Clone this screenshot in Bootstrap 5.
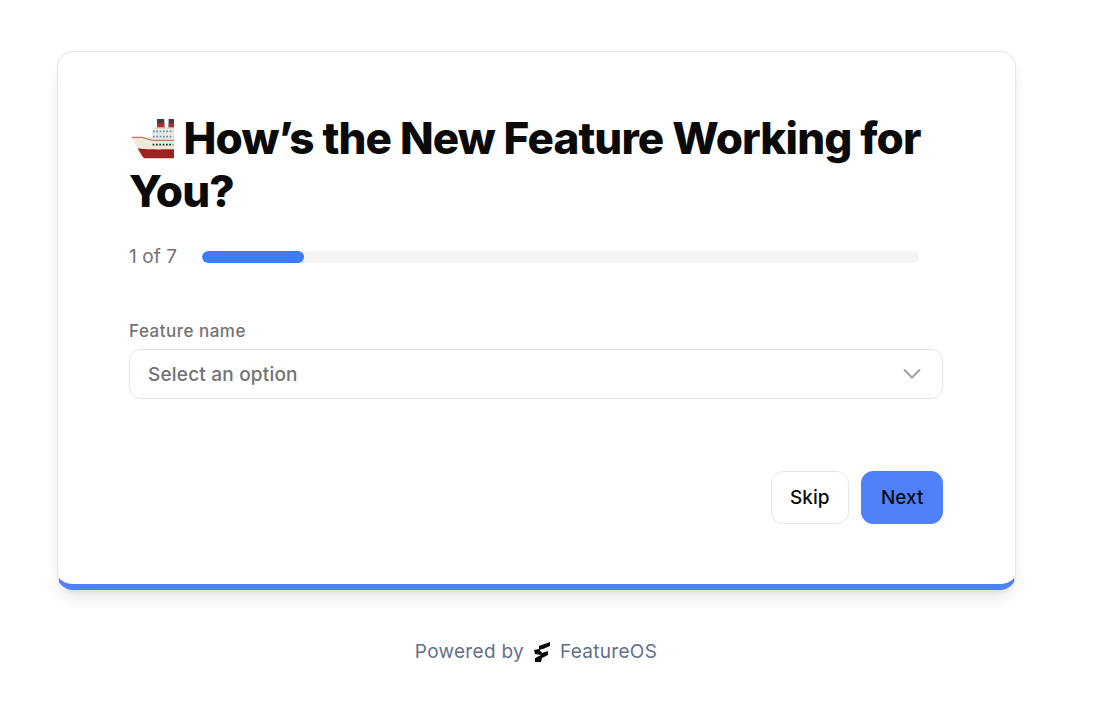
<!DOCTYPE html>
<html lang="en"><head><meta charset="utf-8"><title>Survey</title>
<link href="https://cdn.jsdelivr.net/npm/bootstrap@5.3.0/dist/css/bootstrap.min.css" rel="stylesheet">
<style>
body{font-family:Inter,"Liberation Sans",sans-serif;background:#fff;}
.page-wrap{width:959px;margin-left:56.5px;padding-top:50.5px;}
.survey-card{height:539.5px;border:1px solid #e5e5e5;border-bottom:6px solid #4f81fb;border-radius:16px;padding:60px 72px 0 71.500px;box-shadow:0 10px 15px -3px rgba(0,0,0,.1),0 4px 6px -4px rgba(0,0,0,.1);background:#fff;}
.survey-title{font-family:Inter,sans-serif;font-size:44px;line-height:53px;font-weight:800;color:#0a0a0a;letter-spacing:-.87px;margin:0;}
.ship{width:43px;height:39.300px;vertical-align:-5px;margin:0 10px 0 1.500px;}
.step-row{margin-top:27px;height:24px;width:790px;gap:24.500px;}
.step-text{font-size:19px;letter-spacing:.1px;color:#737373;white-space:nowrap;line-height:24px;}
.track{height:12px;background:#f5f5f5;border-radius:6px;flex:1;overflow:hidden;}
.fill{height:12px;background:#3b7cfb;border-radius:6px;}
.field-label{font-size:17px;letter-spacing:.5px;font-weight:500;color:#737373;line-height:24px;margin-top:50px;margin-bottom:6px;display:block;}
.select-box{height:50px;border:1px solid #e5e5e5;border-radius:12px;padding:0 21px 0 18px;font-size:19px;letter-spacing:.2px;font-weight:500;color:#737373;}
.select-text{padding-top:3px;}
.action-row{margin-top:72px;gap:12px;}
.btn-skip,.btn-next{height:53px;border-radius:12px;font-size:19px;font-weight:500;color:#0a0a0a;display:flex;align-items:center;}
.btn-skip{background:#fff;border:1px solid #e5e5e5;padding:2px 18.500px 0;}
.btn-skip:hover{background:#fff;color:#0a0a0a;border-color:#e5e5e5;}
.btn-next{background:#4f81fb;border:1px solid #4f81fb;padding:2px 18px 0 19px;}
.btn-next:hover{background:#4f81fb;border-color:#4f81fb;color:#0a0a0a;}
.powered{margin-top:48px;font-size:19px;letter-spacing:.3px;color:#64708a;line-height:28px;gap:9px;}
.powered svg{width:18px;height:22px;}
</style></head>
<body>
<div class="page-wrap">
  <div class="survey-card">
    <h1 class="survey-title"><svg class="ship" viewBox="33 55 129 118" role="img" aria-label="ship"><rect x="111" y="55" width="22" height="28" fill="#4a3a3a"/><rect x="111" y="68" width="22" height="15" fill="#b23030"/><rect x="146" y="55" width="16" height="28" fill="#4a3a3a"/><rect x="146" y="68" width="16" height="15" fill="#b23030"/><rect x="104" y="80" width="58" height="6" fill="#d9d6cb"/><rect x="96" y="86" width="66" height="34" fill="#e9e9e4"/><path d="M99 92H160M99 108H160" stroke="#5f8db5" stroke-width="5" stroke-dasharray="5 5"/><path d="M33 108H96V118H162V146H56C46 132 38 120 33 108Z" fill="#efe9dc"/><path d="M36 110H66L96 119H162" fill="none" stroke="#a8433c" stroke-width="2.500"/><path d="M53 143C70 146 90 147 162 146V173H72C64 165 58 152 53 143Z" fill="#9d2323"/><path d="M98 132H160" stroke="#222" stroke-width="5" stroke-dasharray="5 5"/></svg>How’s the New Feature Working for You?</h1>
    <div class="step-row d-flex align-items-center"><span class="step-text">1 of 7</span><div class="track"><div class="fill" style="width:14.29%"></div></div></div>
    <label class="field-label">Feature name</label>
    <div class="select-box d-flex align-items-center justify-content-between"><span class="select-text">Select an option</span><svg width="18" height="11" viewBox="0 0 18 11" fill="none" stroke="#a3a3a3" stroke-width="2"><path d="M1 1.500L9 9.500L17 1.500"/></svg></div>
    <div class="action-row d-flex justify-content-end"><button class="btn btn-skip" type="button">Skip</button><button class="btn btn-next" type="button">Next</button></div>
  </div>
  <div class="powered d-flex justify-content-center align-items-center"><span>Powered by</span><svg viewBox="0 0 18 22"><path d="M6 5L17 1L17 5L10 8L6 9Z" fill="#0a0a0a"/><path d="M1 9L6 8L9 12L15 10L15 14L9 17L8 21L2 21L2 17L8 14L2 13Z" fill="#0a0a0a"/></svg><span>FeatureOS</span></div>
</div>
</body></html>
